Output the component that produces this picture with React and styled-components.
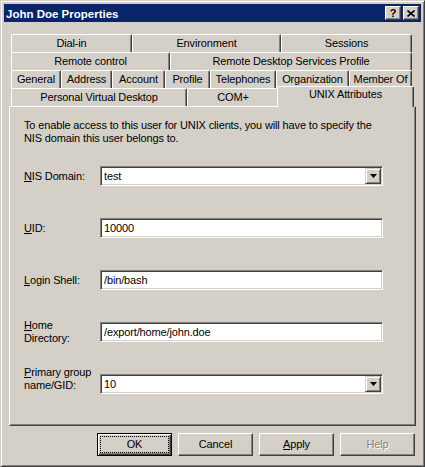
import React from 'react';
import styled, { createGlobalStyle } from 'styled-components';

const GlobalStyle = createGlobalStyle`
    html, body {
        margin: 0;
        padding: 0;
        background: #d4d0c8;
    }
    body {
        font-family: 'Liberation Sans', Arial, sans-serif;
        font-size: 11px;
        letter-spacing: -0.14px;
        color: #000;
    }
`;

const tabRows = [
    [['Dial-in', 121], ['Environment', 149], ['Sessions', 131]],
    [['Remote control', 159], ['Remote Desktop Services Profile', 242]],
    [['General', 50], ['Address', 51], ['Account', 53], ['Profile', 45], ['Telephones', 66], ['Organization', 73], ['Member Of', 63]],
    [['Personal Virtual Desktop', 176], ['COM+', 92], ['UNIX Attributes', 133, true]]
];

const fields = [
    { key: 'N', rest: 'IS Domain:', value: 'test', combo: true },
    { key: 'U', rest: 'ID:', value: '10000' },
    { key: 'L', rest: 'ogin Shell:', value: '/bin/bash' },
    { key: 'H', rest: 'ome', second: 'Directory:', value: '/export/home/john.doe' },
    { key: 'P', rest: 'rimary group', second: 'name/GID:', value: '10', combo: true, raise: true }
];

const App = () => (
    <>
        <GlobalStyle />
        <Window>
            <TitleBar>
                <Title>John Doe Properties</Title>
                <CaptionButtons>
                    <CaptionButton><HelpGlyph>?</HelpGlyph></CaptionButton>
                    <CaptionButton>
                        <svg width="8" height="7" viewBox="0 0 8 7">
                            <path d="M0.5 0.5 L7.5 6.5 M7.5 0.5 L0.5 6.5" stroke="#000" strokeWidth="1.6" fill="none" />
                        </svg>
                    </CaptionButton>
                </CaptionButtons>
            </TitleBar>

            <Body>
                <TabStrip>
                    {tabRows.map((row, i) => (
                        <TabRow key={i}>
                            {row.map(([label, width, active]) => (
                                <Tab key={label} $width={width} $active={active}>{label}</Tab>
                            ))}
                        </TabRow>
                    ))}
                </TabStrip>

                <Panel>
                    <Intro>
                        To enable access to this user for UNIX clients, you will have to specify the NIS domain this user belongs to.
                    </Intro>
                    <Form>
                        {fields.map((f) => (
                            <FieldRow key={f.key}>
                                <Label $raise={f.raise}>
                                    <Key>{f.key}</Key>{f.rest}
                                    {f.second ? <><br />{f.second}</> : null}
                                </Label>
                                <Box>
                                    <BoxText>{f.value}</BoxText>
                                    {f.combo ? (
                                        <DropButton>
                                            <svg width="7" height="4" viewBox="0 0 7 4">
                                                <path d="M0 0 H7 L3.5 4 Z" fill="#000" />
                                            </svg>
                                        </DropButton>
                                    ) : null}
                                </Box>
                            </FieldRow>
                        ))}
                    </Form>
                </Panel>

                <ButtonRow>
                    <PushButton $default>
                        <ButtonFace $focus>OK</ButtonFace>
                    </PushButton>
                    <PushButton>
                        <ButtonFace>Cancel</ButtonFace>
                    </PushButton>
                    <PushButton>
                        <ButtonFace><Key>A</Key>pply</ButtonFace>
                    </PushButton>
                    <PushButton $disabled>
                        <ButtonFace>Help</ButtonFace>
                    </PushButton>
                </ButtonRow>
            </Body>
        </Window>
    </>
);

export default App;

const Window = styled.div`
    box-sizing: border-box;
    width: 425px;
    height: 467px;
    background: #d4d0c8;
    border: 1px solid;
    border-color: #d4d0c8 #404040 #404040 #d4d0c8;
    box-shadow: inset 1px 1px 0 #fff, inset -1px -1px 0 #808080;
    padding: 3px;
    display: flex;
    flex-direction: column;
`;

const TitleBar = styled.div`
    flex: none;
    height: 18px;
    background: #0a246a;
    display: flex;
    align-items: center;
    justify-content: space-between;
    padding: 0 2px 0 2px;
`;

const Title = styled.div`
    color: #fff;
    font-weight: bold;
    font-size: 11.5px;
    letter-spacing: 0;
    padding-top: 1px;
`;

const CaptionButtons = styled.div`
    display: flex;
    gap: 2px;
`;

const CaptionButton = styled.div`
    box-sizing: border-box;
    width: 16px;
    height: 14px;
    background: #d4d0c8;
    border: 1px solid;
    border-color: #fff #404040 #404040 #fff;
    box-shadow: inset -1px -1px 0 #808080;
    display: flex;
    align-items: center;
    justify-content: center;
`;

const HelpGlyph = styled.span`
    font-weight: bold;
    font-size: 11px;
    line-height: 11px;
    letter-spacing: 0;
`;

const Body = styled.div`
    flex: 1;
    display: flex;
    flex-direction: column;
    padding: 12px 5px 0 5px;
`;

const TabStrip = styled.div`
    margin-left: 2px;
    width: 401px;
    display: flex;
    flex-direction: column;
    position: relative;
    z-index: 1;
`;

const TabRow = styled.div`
    display: flex;
    height: 18px;
`;

const Tab = styled.div`
    box-sizing: border-box;
    flex: none;
    align-self: flex-start;
    width: ${(p) => (p.$active ? p.$width + 4 : p.$width)}px;
    height: ${(p) => (p.$active ? 21 : 18)}px;
    margin: ${(p) => (p.$active ? '-2px -2px 0 -2px' : '0')};
    padding-top: ${(p) => (p.$active ? 1 : 2)}px;
    background: #d4d0c8;
    border-top: 1px solid #fff;
    border-left: 1px solid #fff;
    border-right: 1px solid #404040;
    border-radius: 2px 2px 0 0;
    box-shadow: inset -1px 0 0 #808080;
    line-height: 13px;
    text-align: center;
    white-space: nowrap;
`;

const Panel = styled.div`
    box-sizing: border-box;
    flex: none;
    width: 407px;
    height: 320px;
    border: 1px solid;
    border-color: #fff #404040 #404040 #fff;
    box-shadow: inset -1px -1px 0 #808080;
    padding: 12px 0 0 14px;
`;

const Intro = styled.p`
    margin: 0;
    max-width: 360px;
    line-height: 13px;
`;

const Form = styled.div`
    margin-top: 21px;
    display: flex;
    flex-direction: column;
    gap: 32px;
`;

const FieldRow = styled.div`
    display: flex;
    align-items: center;
    height: 20px;
`;

const Label = styled.div`
    flex: none;
    width: 76px;
    line-height: 13px;
    margin-bottom: ${(p) => (p.$raise ? 10 : 0)}px;
`;

const Key = styled.span`
    text-decoration: underline;
    text-underline-offset: 1px;
`;

const Box = styled.div`
    box-sizing: border-box;
    width: 283px;
    height: 20px;
    background: #fff;
    border: 1px solid;
    border-color: #808080 #fff #fff #808080;
    box-shadow: inset 1px 1px 0 #404040, inset -1px -1px 0 #d4d0c8;
    padding: 1px;
    display: flex;
    align-items: center;
`;

const BoxText = styled.div`
    flex: 1;
    padding-left: 2px;
    line-height: 13px;
`;

const DropButton = styled.div`
    box-sizing: border-box;
    flex: none;
    width: 16px;
    height: 16px;
    background: #d4d0c8;
    border: 1px solid;
    border-color: #d4d0c8 #404040 #404040 #d4d0c8;
    box-shadow: inset 1px 1px 0 #fff, inset -1px -1px 0 #808080;
    display: flex;
    align-items: center;
    justify-content: center;
`;

const ButtonRow = styled.div`
    margin-top: 7px;
    display: flex;
    justify-content: flex-end;
    gap: 6px;
    padding-right: 1px;
`;

const PushButton = styled.div`
    box-sizing: border-box;
    width: 75px;
    height: 23px;
    background: #d4d0c8;
    border: 1px solid;
    border-color: ${(p) => (p.$default ? '#000' : '#fff #404040 #404040 #fff')};
    box-shadow: ${(p) => (p.$default
        ? 'inset 1px 1px 0 #fff, inset -1px -1px 0 #404040, inset -2px -2px 0 #808080'
        : 'inset -1px -1px 0 #808080')};
    padding: ${(p) => (p.$default ? 2 : 3)}px;
    display: flex;
    color: ${(p) => (p.$disabled ? '#808080' : '#000')};
    text-shadow: ${(p) => (p.$disabled ? '1px 1px 0 #fff' : 'none')};
`;

const ButtonFace = styled.div`
    flex: 1;
    display: flex;
    align-items: center;
    justify-content: center;
    border: 1px dotted ${(p) => (p.$focus ? '#000' : 'transparent')};
    line-height: 13px;
`;
